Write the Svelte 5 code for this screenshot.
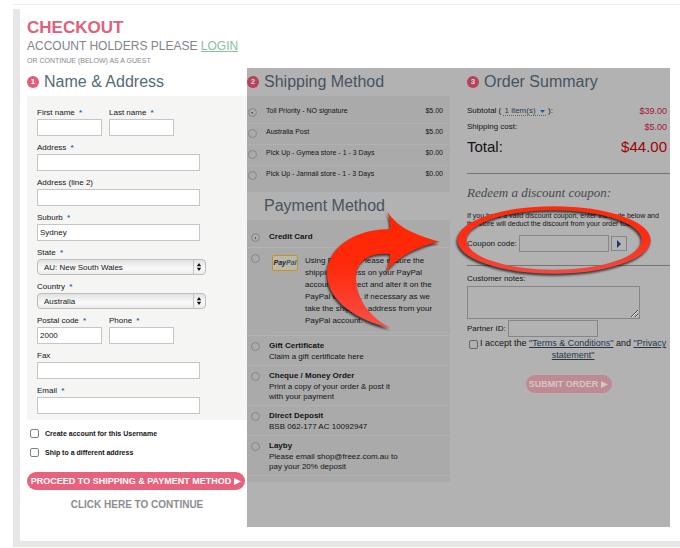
<script>
    let suburb = 'Sydney';
    let postcode = '2000';
    let region = 'AU: New South Wales';
    let country = 'Australia';
    let shipping = 'toll';
    let payment = 'card';

    const shippingMethods = [
        { id: 'toll', label: 'Toll Priority - NO signature', price: '$5.00' },
        { id: 'post', label: 'Australia Post', price: '$5.00' },
        { id: 'gymea', label: 'Pick Up - Gymea store - 1 - 3 Days', price: '$0.00' },
        { id: 'jannali', label: 'Pick Up - Jannali store - 1 - 3 Days', price: '$0.00' }
    ];

    const paypalLines = [
        'Using PayPal? Please ensure the',
        'shipping address on your PayPal',
        'account is correct and alter it on the',
        'PayPal website, if necessary as we',
        'take the shipping address from your',
        'PayPal account.'
    ];

    const otherPayments = [
        { id: 'gift', label: 'Gift Certificate', lines: ['Claim a gift certificate here'] },
        { id: 'cheque', label: 'Cheque / Money Order', lines: ['Print a copy of your order & post it', 'with your payment'] },
        { id: 'deposit', label: 'Direct Deposit', lines: ['BSB 062-177 AC 10092947'] },
        { id: 'layby', label: 'Layby', lines: ['Please email shop@freez.com.au to', 'pay your 20% deposit'] }
    ];
</script>

<div class="page">
    <div class="topline"></div>
    <main class="frame">
        <header>
            <h1>CHECKOUT</h1>
            <p class="holders">ACCOUNT HOLDERS PLEASE <a href="#login">LOGIN</a></p>
            <p class="guest">OR CONTINUE (BELOW) AS A GUEST</p>
        </header>

        <div class="columns">
            <form class="address" on:submit|preventDefault>
                <h2><span class="badge">1</span>Name &amp; Address</h2>
                <div class="fields">
                    <div class="pair">
                        <div class="field">
                            <label for="first">First name <i>*</i></label>
                            <input id="first" type="text">
                        </div>
                        <div class="field">
                            <label for="last">Last name <i>*</i></label>
                            <input id="last" type="text">
                        </div>
                    </div>
                    <div class="field">
                        <label for="address">Address <i>*</i></label>
                        <input id="address" type="text">
                    </div>
                    <div class="field">
                        <label for="address2">Address (line 2)</label>
                        <input id="address2" type="text">
                    </div>
                    <div class="field">
                        <label for="suburb">Suburb <i>*</i></label>
                        <input id="suburb" type="text" bind:value={suburb}>
                    </div>
                    <div class="field">
                        <label for="state">State <i>*</i></label>
                        <div class="select">
                            <select id="state" bind:value={region}>
                                <option>AU: New South Wales</option>
                                <option>AU: Victoria</option>
                            </select>
                            <svg viewBox="0 0 12 14"><path d="M0.5 0v14" stroke="#c4c4c4" /><path d="M6 3l2.2 3.2H3.8zM6 11L3.8 7.8h4.4z" fill="#111" /></svg>
                        </div>
                    </div>
                    <div class="field">
                        <label for="country">Country <i>*</i></label>
                        <div class="select">
                            <select id="country" bind:value={country}>
                                <option>Australia</option>
                                <option>New Zealand</option>
                            </select>
                            <svg viewBox="0 0 12 14"><path d="M0.5 0v14" stroke="#c4c4c4" /><path d="M6 3l2.2 3.2H3.8zM6 11L3.8 7.8h4.4z" fill="#111" /></svg>
                        </div>
                    </div>
                    <div class="pair">
                        <div class="field">
                            <label for="postcode">Postal code <i>*</i></label>
                            <input id="postcode" type="text" bind:value={postcode}>
                        </div>
                        <div class="field">
                            <label for="phone">Phone <i>*</i></label>
                            <input id="phone" type="text">
                        </div>
                    </div>
                    <div class="field">
                        <label for="fax">Fax</label>
                        <input id="fax" type="text">
                    </div>
                    <div class="field">
                        <label for="email">Email <i>*</i></label>
                        <input id="email" type="text">
                    </div>
                </div>
                <div class="checks">
                    <label><input type="checkbox"> Create account for this Username</label>
                    <label><input type="checkbox"> Ship to a different address</label>
                </div>
                <button class="pill proceed">
                    PROCEED TO SHIPPING &amp; PAYMENT METHOD
                    <svg viewBox="0 0 7 7"><path d="M0 0l7 3.5L0 7z" fill="currentColor" /></svg>
                </button>
                <p class="continue">CLICK HERE TO CONTINUE</p>
            </form>

            <div class="dimmed">
                <div class="methods">
                    <h2><span class="badge">2</span>Shipping Method</h2>
                    <div class="panel shipping">
                        {#each shippingMethods as method}
                            <label class="ship-row">
                                <input type="radio" name="shipping" value={method.id} bind:group={shipping}>
                                <span class="name">{method.label}</span>
                                <span>{method.price}</span>
                            </label>
                        {/each}
                    </div>

                    <h2 class="indent">Payment Method</h2>
                    <div class="panel payment">
                        <label class="pay-row">
                            <input type="radio" name="payment" value="card" bind:group={payment}>
                            <b>Credit Card</b>
                        </label>
                        <label class="pay-row paypal">
                            <input type="radio" name="payment" value="paypal" bind:group={payment}>
                            <span class="paypal-body">
                                <span class="paypal-logo"><em>Pay</em><em>Pal</em></span>
                                <span>
                                    {#each paypalLines as line}
                                        <span class="line">{line}</span>
                                    {/each}
                                </span>
                            </span>
                        </label>
                        {#each otherPayments as method}
                            <label class="pay-row">
                                <input type="radio" name="payment" value={method.id} bind:group={payment}>
                                <span>
                                    <b>{method.label}</b>
                                    {#each method.lines as line}
                                        <span class="line">{line}</span>
                                    {/each}
                                </span>
                            </label>
                        {/each}
                        <svg class="arrow" viewBox="0 0 120 140">
                            <defs>
                                <linearGradient id="arrowRed" x1="0" y1="0" x2="0" y2="1">
                                    <stop offset="0" stop-color="#ff2500" />
                                    <stop offset="0.5" stop-color="#ff2a0c" />
                                    <stop offset="1" stop-color="#f8504a" />
                                </linearGradient>
                            </defs>
                            <path
                                d="M65.3 8C75 27 95 35 119.700 41.700C96 47 78 56 64 74.700C68.500 68 70 61 70 54C51 52 36 60 36 78C36 98 49 117 70.700 128C38 121 7 101 7 74C7 47 36 29 70 29C70.500 21 69 14 65.300 8z"
                                fill="url(#arrowRed)"
                            />
                        </svg>
                    </div>
                </div>

                <form class="summary" on:submit|preventDefault>
                    <h2><span class="badge">3</span>Order Summary</h2>
                    <div class="totals">
                        <div class="sum-row">
                            <span>Subtotal ( <a class="items" href="#items">1 item(s) <svg viewBox="0 0 5 3"><path d="M0 0h5L2.500 3z" fill="#1d5c94" /></svg></a> ):</span>
                            <span class="price">$39.00</span>
                        </div>
                        <div class="sum-row">
                            <span>Shipping cost:</span>
                            <span class="price">$5.00</span>
                        </div>
                        <div class="sum-row total">
                            <span>Total:</span>
                            <span class="price">$44.00</span>
                        </div>
                    </div>
                    <section class="coupon">
                        <h3>Redeem a discount coupon:</h3>
                        <p>If you have a valid discount coupon, enter the code below and<br>the store will deduct the discount from your order total.</p>
                        <div class="inline">
                            <label for="coupon">Coupon code:</label>
                            <input id="coupon" type="text">
                            <button class="go" aria-label="Apply coupon">
                                <svg viewBox="0 0 4 8"><path d="M0 0l4 4-4 4z" fill="#1f3568" /></svg>
                            </button>
                        </div>
                        <svg class="ring" viewBox="0 0 200 74">
                            <defs>
                                <linearGradient id="ringRed" x1="0" y1="0" x2="0" y2="1">
                                    <stop offset="0" stop-color="#ff2a0c" />
                                    <stop offset="0.5" stop-color="#fc2e16" />
                                    <stop offset="1" stop-color="#f04a42" />
                                </linearGradient>
                            </defs>
                            <path
                                fill-rule="evenodd"
                                d="M3.300 36a96.700 33.700 0 1 0 193.400 0a96.700 33.700 0 1 0-193.400 0zM12.500 36a87.500 29.800 0 1 0 175 0a87.500 29.800 0 1 0-175 0z"
                                fill="url(#ringRed)"
                            />
                        </svg>
                    </section>
                    <section class="notes">
                        <label for="notes">Customer notes:</label>
                        <textarea id="notes"></textarea>
                        <div class="inline partner">
                            <label for="partner">Partner ID:</label>
                            <input id="partner" type="text">
                        </div>
                        <div class="accept">
                            <input id="accept" type="checkbox">
                            <label for="accept">I accept the <a href="#terms">"Terms &amp; Conditions"</a> and <a href="#privacy">"Privacy<br>statement"</a></label>
                        </div>
                    </section>
                    <button class="pill submit">
                        SUBMIT ORDER
                        <svg viewBox="0 0 7 7"><path d="M0 0l7 3.5L0 7z" fill="currentColor" /></svg>
                    </button>
                </form>
            </div>
        </div>
    </main>
</div>

<style>
    :global(body) {
        background: #fff;
    }

    .page {
        padding: 4px 0 1px 13px;
        font-family: "Liberation Sans", Arial, sans-serif;
        font-size: 8px;
        line-height: 12px;
        color: #141414;
    }

    .page * {
        box-sizing: border-box;
    }

    .topline {
        height: 1px;
        margin-bottom: 4px;
        background: #ededed;
    }

    .frame {
        border-left: 7px solid #e6e6e6;
        border-bottom: 6px solid #e6e6e4;
        padding: 8px 10px 14px 7px;
    }

    header {
        height: 51px;
    }

    h1, h2, h3, p {
        margin: 0;
    }

    h1 {
        font-size: 17px;
        line-height: 22px;
        color: #df607c;
    }

    .holders {
        font-size: 12px;
        line-height: 15px;
        color: #80858a;
    }

    .holders a {
        color: #86c29b;
    }

    .guest {
        font-size: 7px;
        line-height: 13px;
        color: #85888c;
    }

    .columns {
        display: grid;
        grid-template-columns: 220fr 423fr;
    }

    .address {
        padding-top: 4px;
    }

    h2 {
        display: flex;
        align-items: center;
        gap: 5px;
        font-size: 16px;
        line-height: 20px;
        font-weight: normal;
        color: #566a76;
    }

    .badge {
        width: 12px;
        height: 12px;
        border-radius: 50%;
        background: #e05c7b;
        color: #fff;
        font-size: 8px;
        line-height: 12px;
        font-weight: bold;
        text-align: center;
    }

    .fields {
        margin-top: 4px;
        padding: 11px 10px 0;
        background: #f5f5f4;
    }

    .pair {
        display: flex;
        gap: 7px;
    }

    .pair .field {
        width: 65px;
    }

    .field {
        width: 163px;
        padding-bottom: 6px;
    }

    .field label {
        display: block;
    }

    .field i {
        margin-left: 2px;
        font-style: normal;
        font-weight: bold;
        color: #2a6fb0;
    }

    input, select, button, textarea {
        font-family: inherit;
        font-size: 8px;
        color: inherit;
        margin: 0;
    }

    input[type="text"] {
        display: block;
        width: 100%;
        height: 17px;
        padding: 0 2px;
        border: 1px solid #c6c6c6;
        background: #fff;
    }

    .select {
        position: relative;
        width: 169px;
    }

    select {
        display: block;
        appearance: none;
        width: 100%;
        height: 16px;
        padding: 0 6px;
        border: 1px solid #bdbdbd;
        border-radius: 4px;
        background: linear-gradient(#e2e2e2, #fafafa 60%, #ececec);
    }

    .select svg {
        position: absolute;
        right: 1px;
        top: 1px;
        width: 12px;
        height: 14px;
        pointer-events: none;
    }

    .checks {
        padding: 4px 3px 0;
        font-size: 7px;
        font-weight: bold;
    }

    .checks label {
        display: flex;
        align-items: center;
        gap: 6px;
        height: 19px;
    }

    input[type="checkbox"], input[type="radio"] {
        appearance: none;
        flex: none;
        width: 9px;
        height: 9px;
        border: 1px solid #808080;
        border-radius: 2px;
    }

    input[type="radio"] {
        border-color: #868686;
        border-radius: 50%;
    }

    input[type="radio"]:checked {
        background: radial-gradient(circle, #606060 1px, transparent 1px);
    }

    .pill {
        display: flex;
        align-items: center;
        justify-content: center;
        gap: 3px;
        height: 18px;
        padding: 0;
        border: 0;
        border-radius: 9px;
        background: #e8627d;
        color: #fff;
        font-size: 9px;
        font-weight: bold;
        white-space: nowrap;
    }

    .pill svg {
        width: 7px;
        height: 7px;
    }

    .proceed {
        width: calc(100% - 2px);
        margin-top: 10px;
    }

    .continue {
        margin-top: 9px;
        font-size: 10px;
        font-weight: bold;
        text-align: center;
        color: #8a8d90;
    }

    .dimmed {
        display: grid;
        grid-template-columns: 220fr 203fr;
        padding: 4px 0 45px;
        background: #b2b2b2;
    }

    .dimmed h2 {
        color: #46545f;
    }

    .dimmed .badge {
        background: #b8425a;
        color: #d9d9d9;
    }

    .methods {
        padding-right: 17px;
    }

    .indent {
        padding: 4px 0 4px 17px;
    }

    .panel {
        background: #aaa;
    }

    .shipping {
        margin-top: 4px;
        padding: 7px 0 5px;
    }

    .ship-row {
        display: flex;
        height: 21px;
        padding: 0 7px 0 1px;
        border-bottom: 1px solid #b1b1b1;
        font-size: 7px;
        line-height: 16px;
    }

    .ship-row:last-child {
        border-bottom: 0;
    }

    .ship-row input {
        margin: 5px 9px 0 0;
    }

    .name {
        flex: 1;
    }

    .payment {
        position: relative;
        padding: 7px 0 6px;
    }

    .pay-row {
        display: flex;
        gap: 9px;
        padding: 4px 4px 3px;
        border-bottom: 1px solid #b3b3b3;
    }

    .pay-row:first-child {
        padding-bottom: 4px;
    }

    .pay-row > input {
        margin-top: 2px;
    }

    .pay-row b, .line {
        display: block;
        white-space: nowrap;
    }

    .pay-row .line {
        line-height: 10px;
    }

    .paypal {
        gap: 12px;
        padding: 7px 4px 2px;
    }

    .paypal > input {
        margin-top: -1px;
    }

    .paypal-body {
        display: flex;
        flex: 1;
        gap: 7px;
        padding-bottom: 5px;
        border-bottom: 1px solid #b0b0b0;
    }

    .pay-row.paypal .line {
        line-height: 12px;
    }

    .paypal-logo {
        display: flex;
        flex: none;
        align-items: center;
        justify-content: center;
        width: 26px;
        height: 16px;
        border: 1px solid #c2922c;
        border-radius: 2px;
        background: #bcb8a2;
        font-size: 7px;
        font-weight: bold;
        color: #14233f;
    }

    .paypal-logo em + em {
        color: #27577c;
    }

    .arrow {
        position: absolute;
        left: 73px;
        top: -20px;
        width: 120px;
        height: 140px;
        overflow: visible;
        filter: drop-shadow(-1px 2px 1px rgba(0, 0, 0, 0.7));
        pointer-events: none;
    }

    .totals {
        padding: 11px 3px 14px 0;
        border-bottom: 1px solid #747474;
    }

    .sum-row {
        display: flex;
        justify-content: space-between;
        line-height: 16px;
    }

    .price {
        font-size: 9px;
        color: #a0163a;
    }

    .total, .total .price {
        font-size: 15px;
        line-height: 24px;
    }

    .total .price {
        color: #9a0606;
    }

    .items {
        padding: 0 1px;
        border-bottom: 1px dotted #666;
        color: #2a3c4c;
        text-decoration: none;
    }

    .items svg {
        width: 5px;
        height: 3px;
        margin-left: 2px;
    }

    .coupon {
        position: relative;
        padding: 9px 0 13px;
        border-bottom: 1px solid #747474;
    }

    h3 {
        font-family: "Liberation Serif", Georgia, serif;
        font-size: 13px;
        line-height: 20px;
        font-style: italic;
        font-weight: normal;
        color: #444b50;
    }

    .coupon p {
        margin: 9px 0 7px;
        font-size: 7px;
        line-height: 8px;
        white-space: nowrap;
    }

    .inline {
        display: flex;
        align-items: center;
        gap: 2px;
    }

    .summary input, .summary textarea {
        background: transparent;
        border-color: #868686;
    }

    .inline input[type="text"] {
        width: 90px;
    }

    .go {
        display: flex;
        align-items: center;
        justify-content: center;
        width: 16px;
        height: 15px;
        padding: 0;
        border: 1px solid #868686;
        background: #b4b4b4;
    }

    .go svg {
        width: 4px;
        height: 8px;
    }

    .ring {
        position: absolute;
        left: -13px;
        top: 30px;
        width: 200px;
        height: 74px;
        overflow: visible;
        filter: drop-shadow(-1px 2px 1px rgba(0, 0, 0, 0.7));
        pointer-events: none;
    }

    .notes {
        padding-top: 7px;
    }

    textarea {
        display: block;
        width: 173px;
        height: 33px;
        margin-top: 1px;
        border: 1px solid #868686;
    }

    .partner {
        margin-top: 1px;
    }

    .accept {
        display: flex;
        gap: 2px;
        padding-left: 2px;
        font-size: 9px;
        text-align: center;
        white-space: nowrap;
    }

    .accept input {
        margin-top: 3px;
        border-color: #666;
    }

    .accept a {
        color: #24384c;
    }

    .submit {
        width: 86px;
        margin: 14px auto 0;
        background: #c08a95;
        color: #d2c6c9;
    }
</style>
